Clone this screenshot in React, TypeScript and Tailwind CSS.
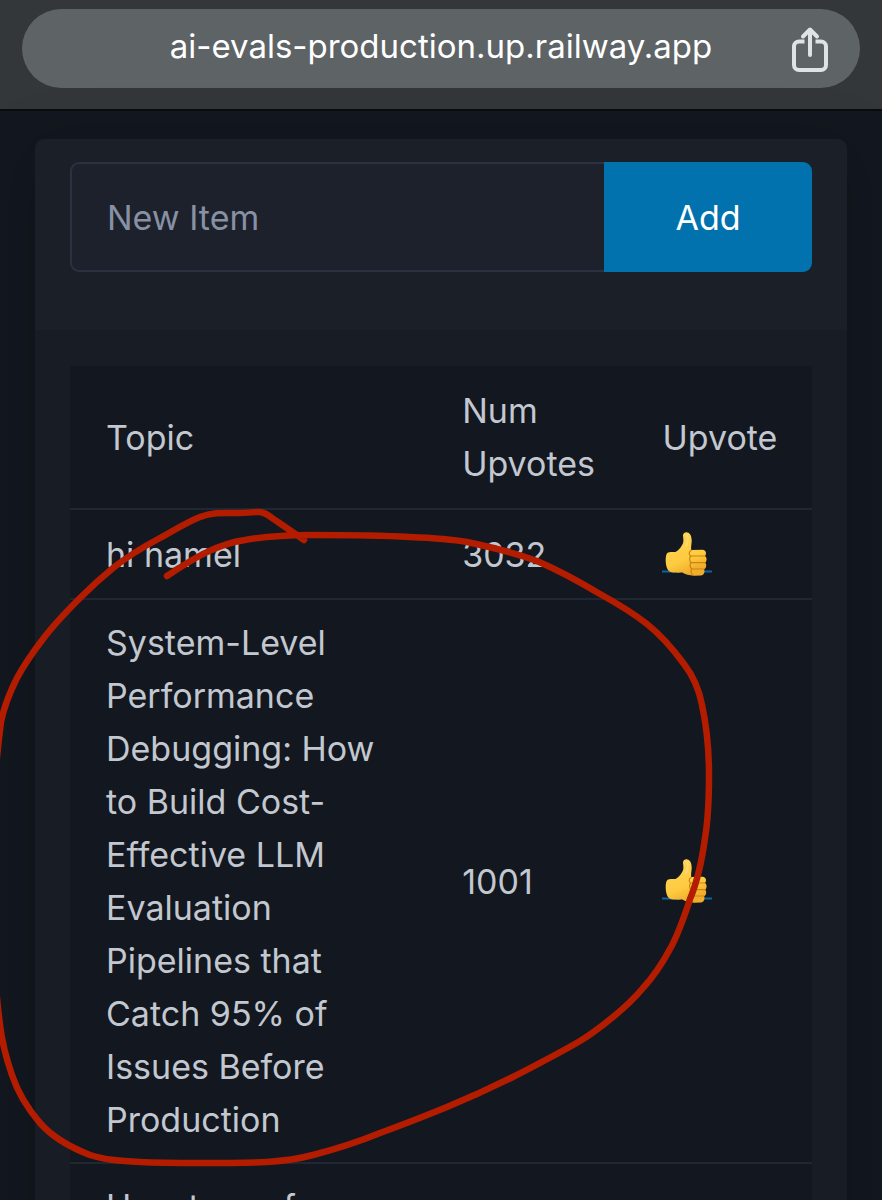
const topics = [
  { id: 1, title: "hi hamel", votes: 3032 },
  {
    id: 2,
    title:
      "System-Level Performance Debugging: How to Build Cost-Effective LLM Evaluation Pipelines that Catch 95% of Issues Before Production",
    votes: 1001,
  },
  { id: 3, title: "How to perform error analysis on multi-step agents in production", votes: 870 },
]

const markerPath =
  "M167 576C195 557 218 544 245 540C268 536 285 535 310 535C350 535 375 535 410 537C435 538 450 539 467 542" +
  "C500 549 515 553 537 561C560 571 580 582 600 594C620 605 633 613 647 624C662 636 673 649 684 664" +
  "C694 677 699 689 702 705C707 728 709 750 709 775C709 798 708 820 705 838C702 860 698 880 690 899" +
  "C684 917 679 933 670 949C662 964 654 976 643 988C633 1000 624 1008 613 1017C602 1026 592 1034 580 1041" +
  "C558 1054 536 1065 513 1077C491 1088 469 1098 447 1107C425 1116 402 1125 380 1133C358 1142 336 1149 313 1155" +
  "C298 1159 283 1161 267 1162C245 1163 222 1163 200 1163C180 1163 160 1163 140 1162C122 1161 105 1160 90 1155" +
  "C72 1148 54 1139 40 1123C28 1109 18 1093 12 1075C6 1058 2 1042 0 1025C-6 980 -10 900 -8 840C-7 800 -4 760 1 722" +
  "C4 706 10 692 17 678C24 665 33 652 43 639C52 627 66 612 80 598C91 587 102 577 113 568C128 556 143 547 160 538" +
  "C173 531 187 522 200 517C213 512 225 513 238 513C248 513 253 512 258 512C266 512 270 517 278 522L304 540"

function ShareIcon() {
  return (
    <svg
      viewBox="0 0 36 46"
      className="h-[46px] w-9"
      fill="none"
      stroke="#dfe2e6"
      strokeWidth="4"
      strokeLinecap="round"
      strokeLinejoin="round"
      aria-hidden="true"
    >
      <path d="M12.500 15.500H7a5 5 0 0 0-5 5V39a5 5 0 0 0 5 5h22a5 5 0 0 0 5-5V20.500a5 5 0 0 0-5-5h-5.500" strokeLinecap="butt" />
      <path d="M18 29V4" />
      <path d="M11 10.500 18 3.500l7 7" />
    </svg>
  )
}

function ThumbsUp() {
  return (
    <svg viewBox="0 0 50 56" className="h-14 w-[50px]" aria-hidden="true">
      <defs>
        <linearGradient id="skin" x1="0" y1="0" x2="0.4" y2="1">
          <stop offset="0" stopColor="#ffd65a" />
          <stop offset="0.7" stopColor="#fecb40" />
          <stop offset="1" stopColor="#f0ac2a" />
        </linearGradient>
      </defs>
      <path d="M0 45.500h50" stroke="#0e639c" strokeWidth="2" />
      <path
        d="M21 10C20.600 7.500 23 6 25.300 6.400C28.500 7 29.700 10.500 29.700 14.500C29.700 18 28.800 20.500 29.200 24L40.500 23.800C44 23.800 45 28 43 30C45.200 31.500 45 35 43.200 36.700C44.800 38.500 44.500 42 42 43.200C43.300 46 41.800 49.200 39 49.400L32 49.700C27 49.500 23.500 48.500 20 46.300C17 47 14 46.500 11 46.500C7.500 46.400 5.500 44.500 4.600 41C3.500 37 3.300 32 4.300 28.700C5 26.400 7 25.800 9.500 25.900L13.500 25.900C16.500 25 20.500 19.500 21.200 16.500C21.600 14.500 21.300 12 21 10Z"
        fill="url(#skin)"
      />
      <g fill="none" stroke="#c98512" strokeWidth="1.200" strokeLinecap="round">
        <path d="M29 24.500C26.500 26 26.800 29 28.800 30C27 32 27.300 35.200 29.200 36.500C27.500 38.500 27.800 41.500 29.700 42.700C28.500 45 29 48 31 49" />
        <path d="M29 30h14" />
        <path d="M29.500 36.600h13.500" />
        <path d="M30 43h12" />
      </g>
      <path d="M25 9c1.500 4 .5 8-1 11" fill="none" stroke="#ffe27d" strokeWidth="2" strokeLinecap="round" opacity="0.600" />
    </svg>
  )
}

// Hand-drawn marker circle laid over the page
function MarkerCircle() {
  return (
    <svg
      viewBox="0 0 882 1200"
      className="pointer-events-none absolute left-0 top-0 w-full"
      fill="none"
      stroke="#b41c00"
      strokeWidth="6.500"
      strokeLinecap="round"
      strokeLinejoin="round"
      aria-hidden="true"
    >
      <path d={markerPath} />
    </svg>
  )
}

export default function App() {
  return (
    <div className="relative min-h-screen overflow-hidden bg-[#13171f] font-['Inter','Liberation_Sans',sans-serif] text-[34px] leading-[53px] text-[#c2c7d0]">
      <header className="border-b-2 border-[#0a0c10] bg-[#34373a] px-[22px] pb-[21px] pt-[9px]">
        <div className="grid h-[79px] grid-cols-[1fr_auto_1fr] items-center rounded-full bg-[#5e6366] px-8">
          <span className="col-start-2 pb-1 text-[33px] text-white">ai-evals-production.up.railway.app</span>
          <button type="button" aria-label="Share" className="justify-self-end">
            <ShareIcon />
          </button>
        </div>
      </header>

      <main className="px-[35px] pt-7">
        <article className="rounded-t-[9px] bg-[#181c24] shadow-[0_10px_60px_rgba(8,10,16,0.25)]">
          <form
            className="flex rounded-t-[9px] bg-[#1b1f27] px-[35px] pb-[58px] pt-[23px]"
            onSubmit={(event) => event.preventDefault()}
          >
            <input
              type="text"
              name="item"
              aria-label="New Item"
              placeholder="New Item"
              className="h-[110px] min-w-0 flex-1 rounded-l-[9px] border-2 border-r-0 border-[#2a3140] bg-[#1c212b] px-[35px] outline-none placeholder:text-[#8891a4]"
            />
            <button type="submit" className="w-52 rounded-r-[9px] bg-[#0172ad] text-white">
              Add
            </button>
          </form>

          <div className="px-[35px] pt-9">
            <table className="w-full table-fixed border-collapse bg-[#13171f] text-left">
              <thead>
                <tr className="border-b-2 border-[#202632]">
                  <th className="w-[48%] px-9 py-[18px] font-normal">Topic</th>
                  <th className="w-[27%] px-9 py-[18px] font-normal">Num Upvotes</th>
                  <th className="w-[25%] px-9 py-[18px] font-normal">Upvote</th>
                </tr>
              </thead>
              <tbody>
                {topics.map((topic) => (
                  <tr key={topic.id} className="border-b-2 border-[#202632]">
                    <td className="px-9 py-4">{topic.title}</td>
                    <td className="px-9 py-4">{topic.votes}</td>
                    <td className="px-9 py-4">
                      <a href="#upvote" aria-label={`Upvote ${topic.title}`} className="flex">
                        <ThumbsUp />
                      </a>
                    </td>
                  </tr>
                ))}
              </tbody>
            </table>
          </div>
        </article>
      </main>

      <MarkerCircle />
    </div>
  )
}
